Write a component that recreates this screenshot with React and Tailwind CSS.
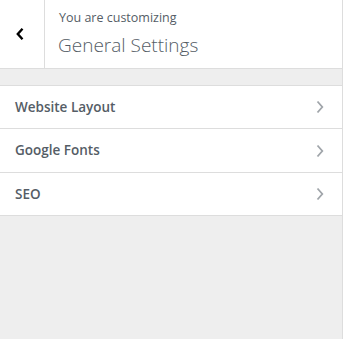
export default function App() {
  const items = [
    ["Website Layout", "h-[43px]"],
    ["Google Fonts", "h-[44px]"],
    ["SEO", "h-[43px]"],
  ];
  return (
    <div className="w-[344px] h-[339px] bg-white" style={{ fontFamily: '"Open Sans", "Noto Sans", sans-serif' }}>
      <div className="w-[343px] h-[339px] bg-[#eeeeee] border-r border-[#dddddd] flex flex-col">
        <div className="h-[69px] bg-white border-b border-[#dddddd] flex">
          <div className="w-[45px] h-full border-r border-[#dddddd] flex items-center justify-center pr-[4px]">
            <svg width="10" height="14" viewBox="0 0 10 14">
              <path d="M7.5 1.8 L2.8 7 L7.5 12.2" fill="none" stroke="#000" strokeWidth="2.4" />
            </svg>
          </div>
          <div className="pl-[14px] pt-[9px] flex flex-col">
            <span className="text-[12.5px] leading-[18px] text-[#555d66]">You are customizing</span>
            <span className="mt-[4px] text-[19px] leading-[28px] font-light text-[#555d66] -ml-px">General Settings</span>
          </div>
        </div>
        <div className="h-[16px]" />
        <div className="border-t border-[#dddddd]">
          {items.map(([t, h]) => (
            <div key={t} className={`${h} bg-white border-b border-[#dddddd] flex items-center justify-between pl-[15px] pr-[18px]`}>
              <span className="text-[13.5px] font-semibold text-[#555d66]">{t}</span>
              <svg width="8" height="14" viewBox="0 0 8 14">
                <path d="M1.5 1.5 L6.3 7 L1.5 12.5" fill="none" stroke="#a0a5aa" strokeWidth="1.8" />
              </svg>
            </div>
          ))}
        </div>
      </div>
    </div>
  );
}
